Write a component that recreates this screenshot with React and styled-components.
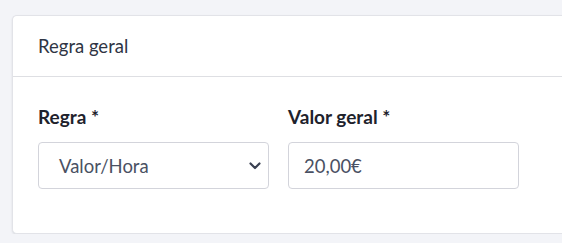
import React from "react";
import styled, { createGlobalStyle } from "styled-components";

const Global = createGlobalStyle`
html, body {
  margin: 0;
  padding: 0;
  background: #f3f4f8;
  overflow: hidden;
}
body {
  font-family: 'Lato', 'Liberation Sans', sans-serif;
}
`

const Page = styled.div`
padding: 15px 0 0 12px;
`
const Card = styled.section`
background: #ffffff;
border: 1px solid #e2e3e8;
border-right: none;
border-radius: 5px 0 0 5px;
box-shadow: 0 1px 2px rgba(30, 35, 50, 0.12);
`
const CardHeader = styled.header`
height: 60px;
display: flex;
align-items: center;
padding: 0 25px;
border-bottom: 1px solid #dedfe3;
font-size: 18.5px;
color: #2f3544;
`
const CardBody = styled.div`
display: flex;
gap: 19px;
padding: 28px 25px 44px;
`
const Field = styled.div`
display: flex;
flex-direction: column;
width: 231px;
`
const Label = styled.label`
font-weight: 700;
font-size: 19px;
color: #1e222c;
margin-bottom: 14px;
line-height: 23px;
`
const Box = styled.div`
height: 45px;
border: 1px solid #d3d4db;
border-radius: 4px;
display: flex;
align-items: center;
padding: 0 ${p => p.$pad}px;
font-size: 18.5px;
color: #4a5163;
justify-content: space-between;
`
const Arrow = styled.span`
display: flex;
margin-right: -13px;
`
const Chevron = () => (
  <svg width="12" height="8" viewBox="0 0 12 8" fill="none">
    <path d="M1.5 1.5 L6 6 L10.5 1.5" stroke="#3a4152" strokeWidth="2.2" strokeLinecap="round" strokeLinejoin="round" />
  </svg>
)

export default function App() {
  return (
    <Page>
      <Global />
      <Card>
        <CardHeader>Regra geral</CardHeader>
        <CardBody>
          <Field>
            <Label>Regra *</Label>
            <Box $pad={20}>
              <span>Valor/Hora</span>
              <Arrow><Chevron /></Arrow>
            </Box>
          </Field>
          <Field>
            <Label>Valor geral *</Label>
            <Box $pad={15}>
              <span>20,00€</span>
            </Box>
          </Field>
        </CardBody>
      </Card>
    </Page>
  );
}
